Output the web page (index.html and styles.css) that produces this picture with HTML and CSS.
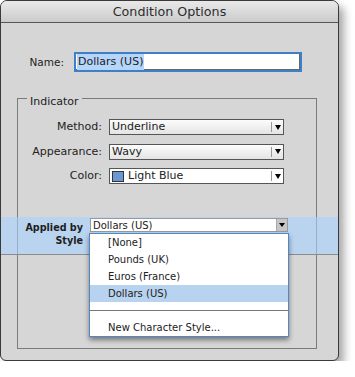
FILE: index.html
```html
<!DOCTYPE html>
<html>
<head>
<meta charset="utf-8">
<link rel="stylesheet" href="styles.css">
</head>
<body>
<div class="window">
  <div class="titlebar"><span class="title">Condition Options</span></div>
  <div class="body">
    <div class="name-row">
      <span class="name-label">Name:</span>
      <div class="name-input"><span class="sel">Dollars (US)</span></div>
    </div>
    <fieldset class="indicator">
      <legend>Indicator</legend>
      <div class="grid">
        <span class="lbl">Method:</span>
        <div class="select grad"><span class="val">Underline</span><span class="arrow"><i class="tri"></i></span></div>
        <span class="lbl">Appearance:</span>
        <div class="select grad"><span class="val">Wavy</span><span class="arrow"><i class="tri"></i></span></div>
        <span class="lbl">Color:</span>
        <div class="select white"><span class="val"><i class="swatch"></i>Light Blue</span><span class="arrow"><i class="tri"></i></span></div>
      </div>
      <div class="band">
        <div class="band-label"><span>Applied by</span><span>Style</span></div>
        <div class="combo-wrap">
          <div class="combo"><span class="combo-val">Dollars (US)</span><span class="combo-btn"><i class="tri"></i></span></div>
          <ul class="menu">
            <li class="item">[None]</li>
            <li class="item">Pounds (UK)</li>
            <li class="item">Euros (France)</li>
            <li class="item active">Dollars (US)</li>
            <li class="sep"><span class="sep-line"></span></li>
            <li class="item">New Character Style...</li>
          </ul>
        </div>
      </div>
    </fieldset>
  </div>
</div>
</body>
</html>
```
FILE: styles.css
```css
* { box-sizing: border-box; }
body {
  margin: 0;
  background: #fff;
  font-family: "DejaVu Sans", "Liberation Sans", sans-serif;
  color: #222;
}
.window {
  width: 339px;
  height: 361px;
  border: 1px solid #3a3a3a;
  border-radius: 7px 7px 6px 6px;
  background: #d6d6d6;
  box-shadow: 5px 6px 8px rgba(0,0,0,0.35);
  overflow: hidden;
}
.titlebar {
  height: 22px;
  border-bottom: 1px solid #555;
  background: linear-gradient(#e9e9e9, #cbcbcb);
  display: flex;
  align-items: center;
  justify-content: center;
  font-size: 12.7px;
  color: #2d2d2d;
}
.body { padding-top: 29px; }
.name-row {
  display: flex;
  align-items: center;
  height: 20px;
}
.name-label {
  width: 63px;
  text-align: right;
  font-size: 10.5px;
}
.name-input {
  margin-left: 10px;
  width: 228px;
  height: 20px;
  border: 2px solid #3f7fc6;
  box-shadow: inset -1px -1px 0 #666;
  background: #fff;
  display: flex;
  align-items: center;
  padding-left: 1px;
  font-size: 11px;
}
.sel { background: #b5d5fb; padding: 1px 1px; line-height: 14px; }

.indicator {
  margin: 15px 21px 0 16px;
  padding: 10px 0 0 0;
  border: 1px solid #7b7b7b;
  height: 262px;
  min-width: 0;
}
.indicator legend {
  margin-left: 9px;
  padding: 8px 3px 0;
  line-height: 14px;
  font-size: 11px;
}
.grid {
  display: grid;
  grid-template-columns: 84px 175px;
  grid-auto-rows: 16px;
  column-gap: 7px;
  row-gap: 8.5px;
}
.lbl {
  text-align: right;
  font-size: 11px;
  line-height: 16px;
}
.select {
  height: 16px;
  border: 1px solid #555;
  display: flex;
  align-items: center;
  font-size: 11px;
}
.grad { background: linear-gradient(#fcfcfc, #e4e4e4); }
.white { background: #fff; }
.val {
  flex: 1;
  padding-left: 2px;
  display: flex;
  align-items: center;
  line-height: 14px;
}
.swatch {
  width: 12px;
  height: 11px;
  border: 1px solid #333;
  background: #6b97d2;
  margin: 0 4px 0 0;
}
.arrow {
  width: 12px;
  height: 10px;
  border-left: 1px solid #999;
  display: flex;
  align-items: center;
  justify-content: center;
}
.tri {
  width: 0;
  height: 0;
  border-left: 3.5px solid transparent;
  border-right: 3.5px solid transparent;
  border-top: 5px solid #000;
}

.band {
  margin: 33px -22px 0 -17px;
  height: 38px;
  border-bottom: 1px solid #8c8c8c;
  background: rgba(166, 209, 254, 0.6);
  display: flex;
  align-items: flex-start;
}
.band-label {
  width: 82px;
  padding-top: 3.5px;
  display: flex;
  flex-direction: column;
  align-items: flex-end;
  font-size: 9.6px;
  font-weight: bold;
  line-height: 13px;
  color: #1e1e1e;
}
.combo-wrap {
  position: relative;
  margin: 1px 0 0 7px;
}
.combo {
  width: 198px;
  height: 14px;
  border: 1px solid #9a9a9a;
  background: #fff;
  display: flex;
  align-items: center;
  font-size: 10px;
}
.combo-val { flex: 1; padding-left: 2px; }
.combo-btn {
  width: 11px;
  height: 12px;
  background: #c6c6c6;
  border-left: 1px solid #aaa;
  display: flex;
  align-items: center;
  justify-content: center;
}
.combo-btn .tri {
  border-left-width: 3px;
  border-right-width: 3px;
  border-top-width: 4px;
}
.menu {
  position: absolute;
  top: 15px;
  left: -1px;
  width: 200px;
  margin: 0;
  padding: 0;
  list-style: none;
  background: #fff;
  border: 1px solid #4f87c7;
  box-shadow: 0 3px 5px rgba(0,0,0,0.45);
  font-size: 10px;
  color: #222;
}
.item {
  height: 17px;
  line-height: 17px;
  padding-left: 18px;
}
.active { background: #b8d3ef; }
.sep {
  height: 17px;
  display: flex;
  align-items: center;
}
.sep-line {
  flex: 1;
  height: 1px;
  background: #777;
}
```
